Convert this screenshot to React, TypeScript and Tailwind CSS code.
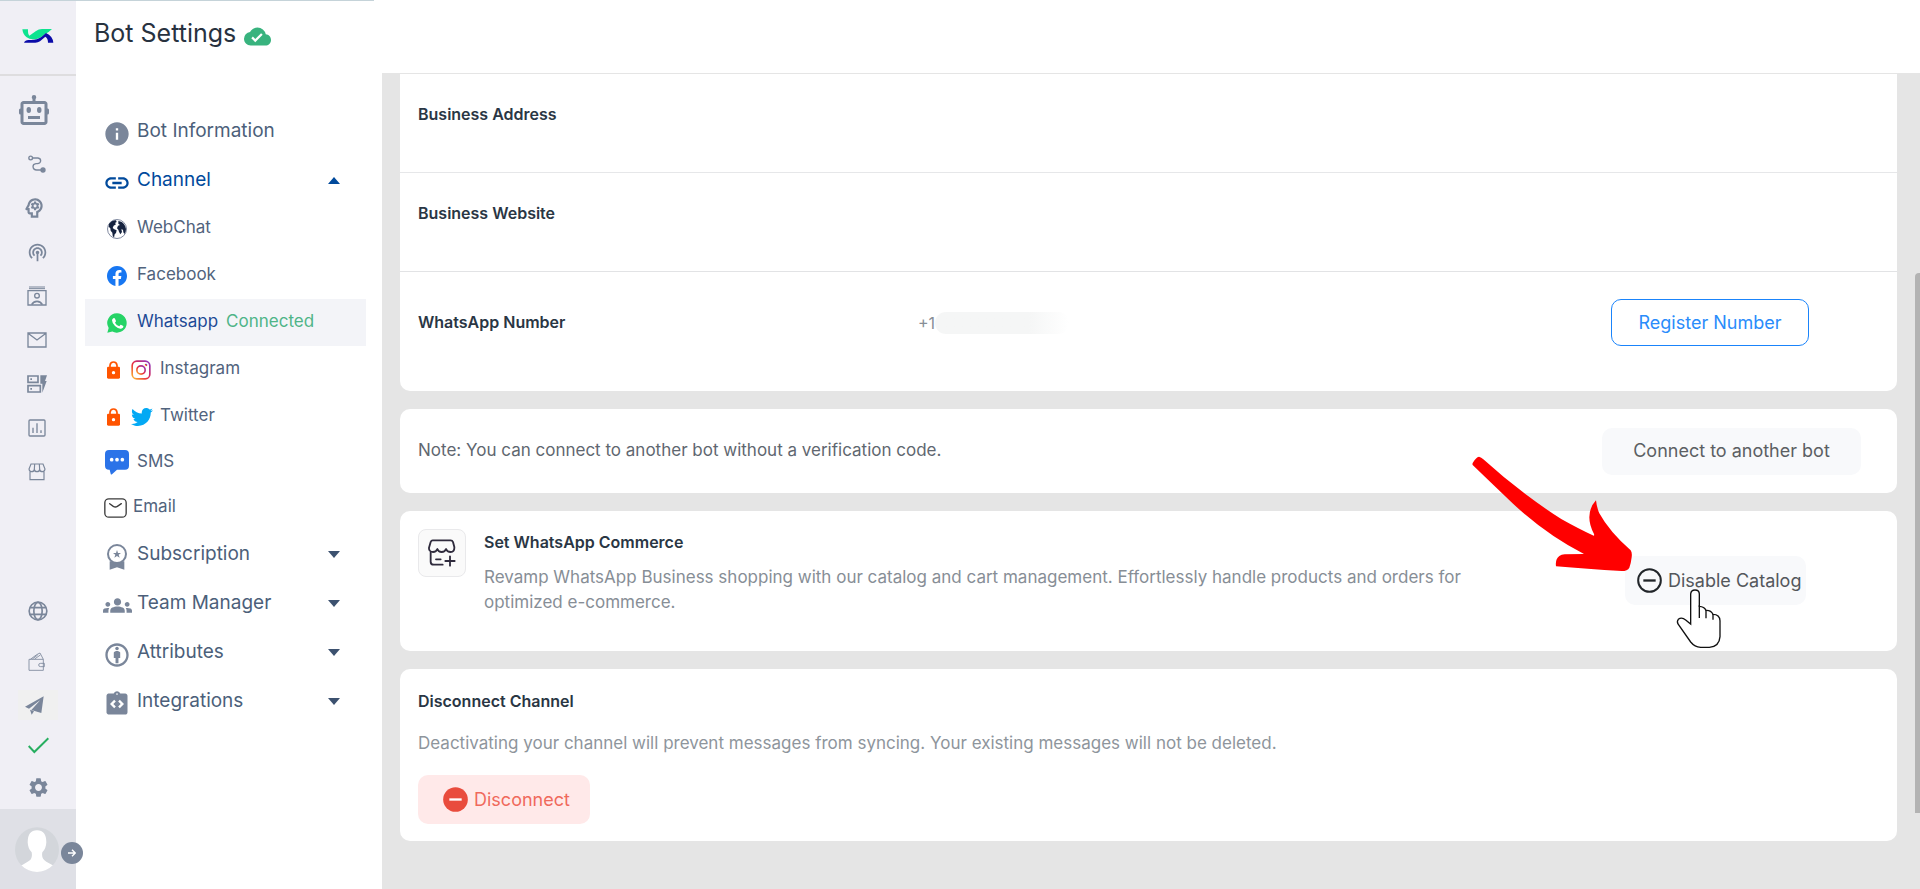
import React from "react";
import { BiBot } from "react-icons/bi";
import { BsFacebook } from "react-icons/bs";
import { FaGlobeAmericas, FaTwitter } from "react-icons/fa";
import {
  MdCloudDone,
  MdGroups,
  MdInfo,
  MdIntegrationInstructions,
  MdLink,
  MdOutlineAttribution,
  MdOutlinePsychology,
  MdPodcasts,
  MdSettings,
} from "react-icons/md";

const Logo = () => (
  <svg width="32" height="16" viewBox="0 0 96 48">
    <path d="M1 4 H18 Q17 18 22 23 L42 9 Q50 3 60 3 H90 Q80 14 66 20 Q52 34 32 34 Q22 34 14 28 Q3 20 1 4Z" fill="#0ce38f" />
    <path d="M6 44 Q10 34 24 36 Q44 37 58 27 L72 15 Q92 24 94 44 H78 Q78 30 70 26 L54 40 Q48 44 40 44Z" fill="#0b0ba8" />
  </svg>
);

const RouteIcon = () => (
  <svg width="18" height="18" viewBox="0 0 54 54" fill="none" stroke="currentColor" strokeWidth="4">
    <circle cx="8" cy="9" r="5.5" />
    <path d="M14 9 H30 Q38 10 38 18 Q37 25 28 26 H24 Q15 27 15 35 Q16 45 26 45 H44" />
    <circle cx="45" cy="45" r="6" fill="currentColor" />
  </svg>
);

const ContactIcon = () => (
  <svg width="20" height="20" viewBox="0 0 60 60" fill="none" stroke="currentColor" strokeWidth="4">
    <path d="M6 3 H54 M6 8 H54" strokeWidth="3" />
    <path d="M3 14 H57 V57 H3Z" />
    <circle cx="30" cy="29" r="7" />
    <path d="M14 56 Q19 46 30 46 Q41 46 46 56" strokeWidth="5" />
  </svg>
);

const MailIcon = () => (
  <svg width="20" height="16" viewBox="0 0 60 48" fill="none" stroke="currentColor" strokeWidth="4">
    <path d="M3 3 H57 V45 H3Z M3 4 L30 24 L57 4" />
  </svg>
);

const FormIcon = () => (
  <svg width="20" height="18" viewBox="0 0 60 54" fill="none" stroke="currentColor" strokeWidth="5">
    <path d="M3 3 H33 V22 H3Z M3 32 H40 V51 H3Z M10 12.500 H15 M10 41.500 H15" />
    <path d="M40 1 H60 L54 18 H59 L46 53 V26 H40Z" fill="currentColor" stroke="none" />
  </svg>
);

const ChartIcon = () => (
  <svg width="18" height="18" viewBox="0 0 54 54" fill="none" stroke="currentColor" strokeWidth="4">
    <rect x="3" y="3" width="48" height="48" rx="3" />
    <path d="M15 26 V42 M27 13 V42 M39 34 V42" />
  </svg>
);

const StoreIcon = () => (
  <svg width="18" height="18" viewBox="0 0 54 54" fill="none" stroke="currentColor" strokeWidth="3.5">
    <path d="M9 3 H45 L51 18 Q50 26 43 26 Q36 26 35 19 Q34 26 27 26 Q20 26 19 19 Q18 26 11 26 Q4 26 3 18Z M19 19 L20 3 M35 19 L34 3 M6 26 V50 H48 V26" />
  </svg>
);

const GlobeIcon = () => (
  <svg width="20" height="20" viewBox="0 0 60 60" fill="none" stroke="currentColor" strokeWidth="5">
    <circle cx="30" cy="30" r="26.5" />
    <ellipse cx="30" cy="30" rx="12.5" ry="26" />
    <path d="M6 20 H54 M6 40 H54" />
  </svg>
);

const WalletIcon = () => (
  <svg width="17" height="19" viewBox="0 0 51 57" fill="none" stroke="currentColor" strokeWidth="2.5">
    <path d="M3 22 H46 V55 H3Z M7 22 L26 8 L36 3 L46 22 M13 21 L29 9 M20 21 L37 9" />
    <path d="M49 34 H38 Q32 34 32 39 Q32 44 38 44 H49Z" />
  </svg>
);

const PlaneIcon = () => (
  <svg width="19" height="19" viewBox="0 0 57 57" fill="currentColor">
    <path d="M56 1 L0 32 L12 38 L46 12 L19 42 L49 51Z M15 41 L20 56 L27 46Z" />
  </svg>
);

const CheckIcon = () => (
  <svg width="21" height="17" viewBox="0 0 63 51" fill="none" stroke="#27ae60" strokeWidth="6">
    <path d="M2 27 L19 45 L61 4" />
  </svg>
);

const Avatar = () => (
  <svg width="44" height="46" viewBox="0 0 132 138">
    <defs>
      <clipPath id="avatar-clip">
        <ellipse cx="66" cy="68" rx="66" ry="67" />
      </clipPath>
    </defs>
    <g clipPath="url(#avatar-clip)">
      <rect width="132" height="138" fill="#d3d6db" />
      <path d="M66 10 Q38 10 38 46 Q39 66 50 76 Q54 98 38 104 L18 116 V138 H116 V116 L94 104 Q78 96 82 76 Q93 66 94 46 Q94 10 66 10Z" fill="#fff" />
    </g>
  </svg>
);

const EarthIcon = () => (
  <span className="relative flex size-5 items-center justify-center rounded-full border border-[#8089a0] bg-white">
    <svg width="18" height="18" viewBox="0 0 54 54" fill="#16233f">
      <path d="M3 12 Q10 2 24 1 L26 6 L21 9 L24 13 L17 17 L14 24 L19 28 L26 31 L24 39 L20 43 L18 53 L14 47 L13 38 L8 32 L7 25 L2 20Z" />
      <path d="M31 3 Q44 4 51 17 L54 27 Q54 36 49 42 L46 37 L45 29 L40 28 L42 36 L37 43 L33 35 L31 29 L27 25 L30 17 L36 15 L31 11Z" />
    </svg>
  </span>
);

const WhatsAppIcon = () => (
  <svg width="20" height="20" viewBox="0 0 60 60">
    <path d="M30 1 A29 29 0 1 1 16 55.400 L1 59 L5 45 A29 29 0 0 1 30 1Z" fill="#25d366" />
    <path d="M19 16 Q22 14 24 17 L27 24 Q27 26 24 29 Q28 37 37 40 L40 36 Q41 35 43 36 L49 39 Q50 46 42 47 Q34 48 24 39 Q15 30 15 22 Q16 18 19 16Z" fill="#fff" />
  </svg>
);

const LockIcon = () => (
  <svg width="13" height="18" viewBox="0 0 39 54">
    <path d="M9 24 V13 Q10 3 19.500 3 Q29 3 30 13 V24" fill="none" stroke="#ff5400" strokeWidth="5" />
    <rect x="0" y="17" width="39" height="36" rx="4" fill="#ff5400" />
    <circle cx="19.500" cy="35" r="5" fill="#fff" />
  </svg>
);

const InstagramIcon = () => (
  <svg width="20" height="20" viewBox="0 0 60 60" fill="none" stroke="url(#insta)" strokeWidth="5">
    <defs>
      <linearGradient id="insta" x1="0" y1="1" x2="1" y2="0">
        <stop offset="0" stopColor="#fdc02f" />
        <stop offset="0.45" stopColor="#e8283f" />
        <stop offset="1" stopColor="#8a3ac8" />
      </linearGradient>
    </defs>
    <rect x="3.500" y="3.500" width="53" height="53" rx="14" />
    <circle cx="30" cy="30" r="12.500" />
    <circle cx="45" cy="15" r="1.500" />
  </svg>
);

const SmsIcon = () => (
  <svg width="24" height="25" viewBox="0 0 72 75">
    <path d="M12 0 H60 Q72 0 72 12 V47 Q72 59 60 59 H36 L21 73 Q18 75 17 71 L14 59 H12 Q0 59 0 47 V12 Q0 0 12 0Z" fill="#2b73e8" />
    <g fill="#fff">
      <circle cx="20" cy="29" r="5.500" />
      <circle cx="36" cy="29" r="5.500" />
      <circle cx="52" cy="29" r="5.500" />
    </g>
  </svg>
);

const EmailIcon = () => (
  <svg width="23" height="20" viewBox="0 0 69 60" fill="none" stroke="#3b3b3b" strokeWidth="4">
    <rect x="2.500" y="2.500" width="64" height="55" rx="12" />
    <path d="M17 17 L28 25 Q34 29 40 25 L52 17" strokeLinecap="round" />
  </svg>
);

const BadgeIcon = () => (
  <svg width="20" height="26" viewBox="0 0 60 78">
    <path d="M8 52 H52 V77 L30 70 L8 77Z" fill="currentColor" />
    <circle cx="30" cy="30" r="27" fill="#fff" stroke="currentColor" strokeWidth="6" />
    <path d="M30 18 L33 27 H42 L35 32 L38 41 L30 36 L22 41 L25 32 L18 27 H27Z" fill="currentColor" />
  </svg>
);

const ShopPlusIcon = () => (
  <svg width="28" height="28" viewBox="0 0 84 84" fill="none" stroke="#2f2b3d" strokeWidth="5.500" strokeLinecap="round" strokeLinejoin="round">
    <path d="M14 4 H68 Q73 4 75 9 L79 24 Q80 38 68 39 Q57 39 54 30 Q51 39 41 39 Q31 39 28 30 Q25 39 15 39 Q2 38 3 26 L8 9 Q10 4 14 4Z" />
    <path d="M8 40 V68 Q8 77 17 77 H44 M24 61 H38 M66 52 V80 M52 66 H80" />
  </svg>
);

const MinusCircle = ({ solid }: { solid?: boolean }) => (
  <svg width="25" height="25" viewBox="0 0 75 75" fill={solid ? "#e94c3d" : "none"}>
    <circle cx="37.500" cy="37.500" r={solid ? 37 : 34} stroke={solid ? "none" : "#22262a"} strokeWidth="6" />
    <path d="M19 37.500 H56" stroke={solid ? "#fff" : "#22262a"} strokeWidth="7" />
  </svg>
);

const Caret = ({ up }: { up?: boolean }) => (
  <svg width="12" height="7" viewBox="0 0 12 7" className="ml-auto">
    <path d={up ? "M6 0 L12 7 H0Z" : "M0 0 H12 L6 7Z"} fill={up ? "#014a9c" : "#3c516f"} />
  </svg>
);

const Arrow = () => (
  <svg width="167" height="123" viewBox="150 99 501 369" className="pointer-events-none absolute -top-[103px] -left-[155px]">
    <path
      d="M177 110 Q184 112 190 118 Q300 218 425 298 Q475 326 518 346 Q524 349 522 342 Q508 316 508 292 Q508 262 528 241 Q530 262 538 280 Q568 335 632 391 Q637 398 635 412 Q633 430 628 443 Q623 453 605 453 Q500 447 408 439 Q405 418 418 408 Q424 403 434 403 L492 402 Q380 345 280 252 Q215 190 158 135 Q156 131 160 126 Q168 112 177 110Z"
      fill="#ff0000"
    />
  </svg>
);

const Pointer = () => (
  <svg width="47" height="61" viewBox="765 504 141 183" fill="none" stroke="#111" strokeWidth="4" className="pointer-events-none absolute top-[32px] left-[50px]">
    <path
      d="M812 612 V522 Q813 510 825 510 Q838 510 838 522 V559 Q853 560 858 571 Q873 570 879 583 Q899 583 900 602 V650 Q898 680 868 682 H842 Q824 681 812 666 L774 612 Q770 604 775 598 Q785 590 797 600Z"
      fill="#fff"
    />
    <path d="M838 556 V594 M858 570 V595 M879 582 V599" />
  </svg>
);

function RailButton({ label, className, children }: { label: string; className: string; children: React.ReactNode }) {
  return (
    <button type="button" aria-label={label} className={`flex w-full items-center justify-center text-[#7a869a] ${className}`}>
      {children}
    </button>
  );
}

function Rail() {
  return (
    <nav className="flex w-[76px] shrink-0 flex-col bg-[#f0eff5]">
      <a href="#home" aria-label="Home" className="flex h-[76px] items-center justify-center border-b-2 border-[#dedddf] pb-0.5">
        <Logo />
      </a>
      <RailButton label="Bots" className="h-[66px] pt-0.5 pr-2">
        <BiBot size={36} />
      </RailButton>
      <RailButton label="Flows" className="h-11 pr-0.5"><RouteIcon /></RailButton>
      <RailButton label="Training" className="h-11 pr-2"><MdOutlinePsychology size={26} /></RailButton>
      <RailButton label="Broadcast" className="h-11 pr-0.5"><MdPodcasts size={21} /></RailButton>
      <RailButton label="Contacts" className="h-11 pr-0.5"><ContactIcon /></RailButton>
      <RailButton label="Inbox" className="h-11 pr-0.5"><MailIcon /></RailButton>
      <RailButton label="Forms" className="h-11 pr-0.5"><FormIcon /></RailButton>
      <RailButton label="Analytics" className="h-11 pr-0.5"><ChartIcon /></RailButton>
      <RailButton label="Store" className="h-11 pr-0.5"><StoreIcon /></RailButton>
      <div className="mt-auto">
        <RailButton label="Language" className="h-[50px]"><GlobeIcon /></RailButton>
        <RailButton label="Billing" className="h-[50px] pr-1"><WalletIcon /></RailButton>
        <RailButton label="Send" className="h-[38px]">
          <span className="flex h-[30px] w-10 items-center justify-center bg-[#f0f0f0] pr-2"><PlaneIcon /></span>
        </RailButton>
        <RailButton label="Status" className="h-[42px]"><CheckIcon /></RailButton>
        <RailButton label="Settings" className="h-[43px]"><MdSettings size={23} /></RailButton>
        <div className="relative flex h-20 items-center justify-center bg-[#dfe0e6] pt-0.5 pr-0.5">
          <Avatar />
          <button type="button" aria-label="Expand menu" className="absolute top-[33px] left-[61px] flex size-[22px] items-center justify-center rounded-full bg-[#7a869a]">
            <svg width="8" height="8" viewBox="0 0 24 24" fill="none" stroke="#fff" strokeWidth="4">
              <path d="M0 12 H22 M12 2 L22 12 L12 22" />
            </svg>
          </button>
        </div>
      </div>
    </nav>
  );
}

function MainItem({ icon, label, active, caret }: { icon: React.ReactNode; label: string; active?: boolean; caret?: boolean }) {
  return (
    <a href="#section" className={`flex h-[49px] items-center pr-[26px] pl-4 text-[19px] ${active ? "text-[#014a9c]" : "text-[#4c5f7a]"}`}>
      <span className={`mr-1 flex w-8 shrink-0 justify-center pt-1 ${active ? "text-[#014a9c]" : "text-[#7a869a]"}`}>{icon}</span>
      {label}
      {caret && <Caret up={active} />}
    </a>
  );
}

function SubItem({
  icon,
  label,
  locked,
  className = "h-[47px]",
  iconClassName = "w-7",
}: {
  icon: React.ReactNode;
  label: string;
  locked?: boolean;
  className?: string;
  iconClassName?: string;
}) {
  return (
    <a href="#channel" className={`flex items-center pb-0.5 pl-[18px] text-[17px] text-[#51637d] ${className}`}>
      {locked && (
        <span className="mr-2 ml-1 shrink-0 pt-0.5">
          <LockIcon />
        </span>
      )}
      <span className={`mr-1 flex shrink-0 justify-center pt-0.5 ${iconClassName}`}>{icon}</span>
      {label}
    </a>
  );
}

function SettingsPanel() {
  return (
    <aside className="w-[306px] shrink-0 bg-white">
      <h1 className="flex h-[68px] items-center pl-[18px] text-[25px] text-[#28323f]">
        Bot Settings
        <MdCloudDone size={27} className="mt-1 ml-2 text-[#38b37e]" />
      </h1>
      <nav className="mr-4 ml-[9px] pt-[39px]">
        <MainItem icon={<MdInfo size={28} />} label="Bot Information" />
        <MainItem icon={<MdLink size={28} />} label="Channel" active caret />
        <SubItem icon={<EarthIcon />} label="WebChat" iconClassName="w-[30px] pr-0.5" />
        <SubItem icon={<BsFacebook size={20} className="text-[#1877f2]" />} label="Facebook" iconClassName="w-[30px] pr-0.5" />
        <a href="#whatsapp" className="flex h-[47px] items-center bg-[#f3f4f8] pb-0.5 pl-[18px] text-[17px] text-[#1d4a96]">
          <span className="mr-1 flex w-[30px] shrink-0 justify-center pt-0.5 pr-0.5">
            <WhatsAppIcon />
          </span>
          Whatsapp
          <span className="ml-2 text-[#4fb488]">Connected</span>
        </a>
        <SubItem icon={<InstagramIcon />} label="Instagram" locked iconClassName="w-7 pr-0.5" />
        <SubItem icon={<FaTwitter size={22} className="text-[#03a9f4]" />} label="Twitter" locked />
        <SubItem icon={<SmsIcon />} label="SMS" className="h-[45px]" iconClassName="w-[30px] pr-0.5" />
        <SubItem icon={<EmailIcon />} label="Email" className="h-[45px]" iconClassName="w-[26px] pr-0.5" />
        <MainItem icon={<BadgeIcon />} label="Subscription" caret />
        <MainItem icon={<MdGroups size={29} />} label="Team Manager" caret />
        <MainItem icon={<MdOutlineAttribution size={28} />} label="Attributes" caret />
        <MainItem icon={<MdIntegrationInstructions size={28} />} label="Integrations" caret />
      </nav>
    </aside>
  );
}

export default function App() {
  return (
    <div className="relative flex min-h-screen bg-white font-['Inter','Liberation_Sans',sans-serif]">
      <div className="absolute top-0 left-0 h-px w-[374px] bg-[#c5d3d9]" />
      <Rail />
      <SettingsPanel />
      <div className="flex min-w-0 flex-1 flex-col">
        <header className="h-[73px] shrink-0 bg-white" />
        <main className="relative flex-1 bg-[#e5e5e5] pt-px pr-[23px] pb-4 pl-[18px] text-base">
          <div className="absolute top-[200px] right-0 h-[540px] w-[5px] rounded-tl bg-[#b3b3b3]" />

          <section className="mb-[18px] rounded-b-[10px] bg-white">
            <div className="h-[99px] border-b border-[#e6e7e9] px-[18px] pt-7">
              <h2 className="font-semibold text-[#2a3644]">Business Address</h2>
            </div>
            <div className="h-[99px] border-b border-[#e2e3e5] px-[18px] pt-7">
              <h2 className="font-semibold text-[#2a3644]">Business Website</h2>
            </div>
            <div className="flex h-[119px] items-start pt-[27px] pr-[88px] pl-[18px]">
              <h2 className="w-[500px] leading-[47px] font-semibold text-[#2a3644]">WhatsApp Number</h2>
              <p className="flex h-[47px] items-center text-[#878e96]">
                +1
                <span className="h-[22px] w-[134px] rounded-full bg-linear-to-r from-[#f5f6f6] from-70% to-white" />
              </p>
              <button type="button" className="ml-auto h-[47px] w-[198px] rounded-[10px] border border-[#1a84fb] text-lg text-[#2a8cfb]">
                Register Number
              </button>
            </div>
          </section>

          <section className="mb-[18px] flex h-[84px] items-center justify-between rounded-[10px] bg-white pr-9 pl-[18px]">
            <p className="text-[17px] text-[#5f6770]">Note: You can connect to another bot without a verification code.</p>
            <button type="button" className="h-[47px] w-[259px] rounded-[10px] bg-[#f8f9fb] text-lg text-[#5c5f63]">
              Connect to another bot
            </button>
          </section>

          <section className="mb-[18px] flex h-[140px] items-start rounded-[10px] bg-white pt-[18px] pr-[91px] pl-[18px]">
            <div className="flex size-12 shrink-0 items-center justify-center rounded-lg border border-[#e9e9eb] bg-[#fafafa]">
              <ShopPlusIcon />
            </div>
            <div className="ml-[18px] max-w-[1010px]">
              <h2 className="leading-[26px] font-semibold text-[#2a3644]">Set WhatsApp Commerce</h2>
              <p className="mt-[10px] text-[17px] leading-[25px] text-[#878e96]">
                Revamp WhatsApp Business shopping with our catalog and cart management. Effortlessly handle products and orders for optimized e-commerce.
              </p>
            </div>
            <div className="relative mt-[27px] ml-auto shrink-0">
              <button type="button" className="flex h-[49px] w-[181px] items-center gap-1.5 rounded-[10px] bg-[#f8f9fb] pl-3 text-lg whitespace-nowrap text-[#54575b]">
                <MinusCircle />
                Disable Catalog
              </button>
              <Arrow />
              <Pointer />
            </div>
          </section>

          <section className="h-[172px] rounded-[10px] bg-white px-[18px] pt-5">
            <h2 className="font-semibold text-[#2a3644]">Disconnect Channel</h2>
            <p className="mt-[18px] text-[17px] leading-6 text-[#8e959c]">
              Deactivating your channel will prevent messages from syncing. Your existing messages will not be deleted.
            </p>
            <button type="button" className="mt-5 flex h-[49px] w-[172px] items-center gap-1.5 rounded-[10px] bg-[#ffe9e9] pl-[25px] text-lg text-[#f0695c]">
              <MinusCircle solid />
              Disconnect
            </button>
          </section>
        </main>
      </div>
    </div>
  );
}
